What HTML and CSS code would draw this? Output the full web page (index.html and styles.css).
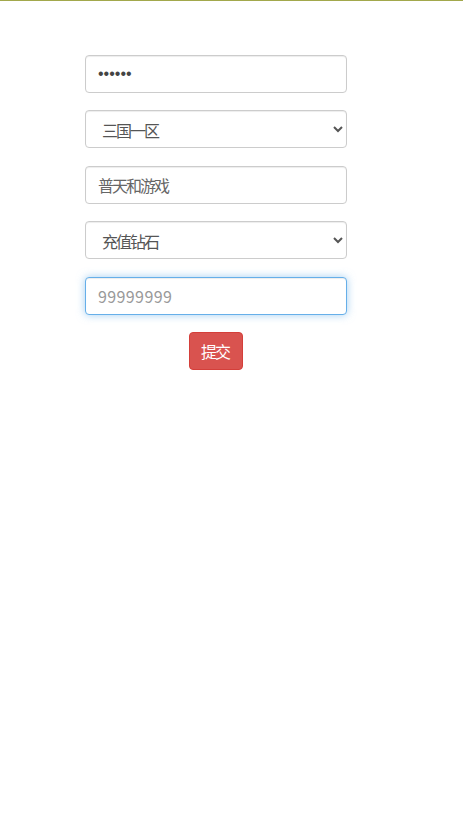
FILE: index.html
```html
<!DOCTYPE html>
<html lang="zh-CN">
<head>
<meta charset="utf-8">
<title>充值</title>
<link rel="stylesheet" href="styles.css">
</head>
<body>
<div class="topbar"></div>
<form class="form">
  <input class="field field-pass" type="password" value="123456">
  <select class="field field-select">
    <option>三国一区</option>
    <option>三国二区</option>
  </select>
  <input class="field" type="text" value="普天和游戏">
  <select class="field field-select">
    <option>充值钻石</option>
    <option>充值金币</option>
  </select>
  <input class="field field-num field-focus" type="text" placeholder="99999999">
  <div class="actions">
    <button class="btn-danger" type="button">提交</button>
  </div>
</form>
</body>
</html>
```

FILE: styles.css
```css
html, body {
  margin: 0;
  padding: 0;
  background: #fff;
}

body {
  font-family: "Noto Sans CJK SC", "Noto Sans", sans-serif;
  color: #555;
}

.topbar {
  height: 1px;
  background: #a2a84c;
}

.form {
  width: 262px;
  margin: 53.5px 0 0 85px;
  display: flex;
  flex-direction: column;
  gap: 17.6px;
}

.field {
  box-sizing: border-box;
  display: block;
  width: 100%;
  height: 38px;
  margin: 0;
  padding: 6px 12px;
  font-family: "Noto Sans CJK SC", "Noto Sans", sans-serif;
  font-size: 16px;
  letter-spacing: -2px;
  color: #666;
  background: #fff;
  border: 1px solid #ccc;
  border-radius: 4px;
  box-shadow: inset 0 1px 1px rgba(0, 0, 0, 0.075);
  outline: none;
}

.field-select {
  padding: 6px 8px 6px 12px;
  color: #555;
}

.field-pass {
  font-family: "Liberation Sans", Arial, sans-serif;
  letter-spacing: 0;
  color: #444;
}

.field-num {
  letter-spacing: 0.4px;
}

.field-num::placeholder {
  color: #999;
  opacity: 1;
}

.field-focus {
  border-color: #66afe9;
  box-shadow: inset 0 1px 1px rgba(0, 0, 0, 0.075), 0 0 8px rgba(102, 175, 233, 0.6);
}

.actions {
  display: flex;
  justify-content: center;
}

.btn-danger {
  box-sizing: border-box;
  width: 54px;
  height: 38px;
  padding: 0;
  font-family: "Noto Sans CJK SC", "Noto Sans", sans-serif;
  font-size: 16px;
  letter-spacing: -2px;
  text-indent: -2px;
  color: #fff;
  background: #d9534f;
  border: 1px solid #d43f3a;
  border-radius: 4px;
}
```
